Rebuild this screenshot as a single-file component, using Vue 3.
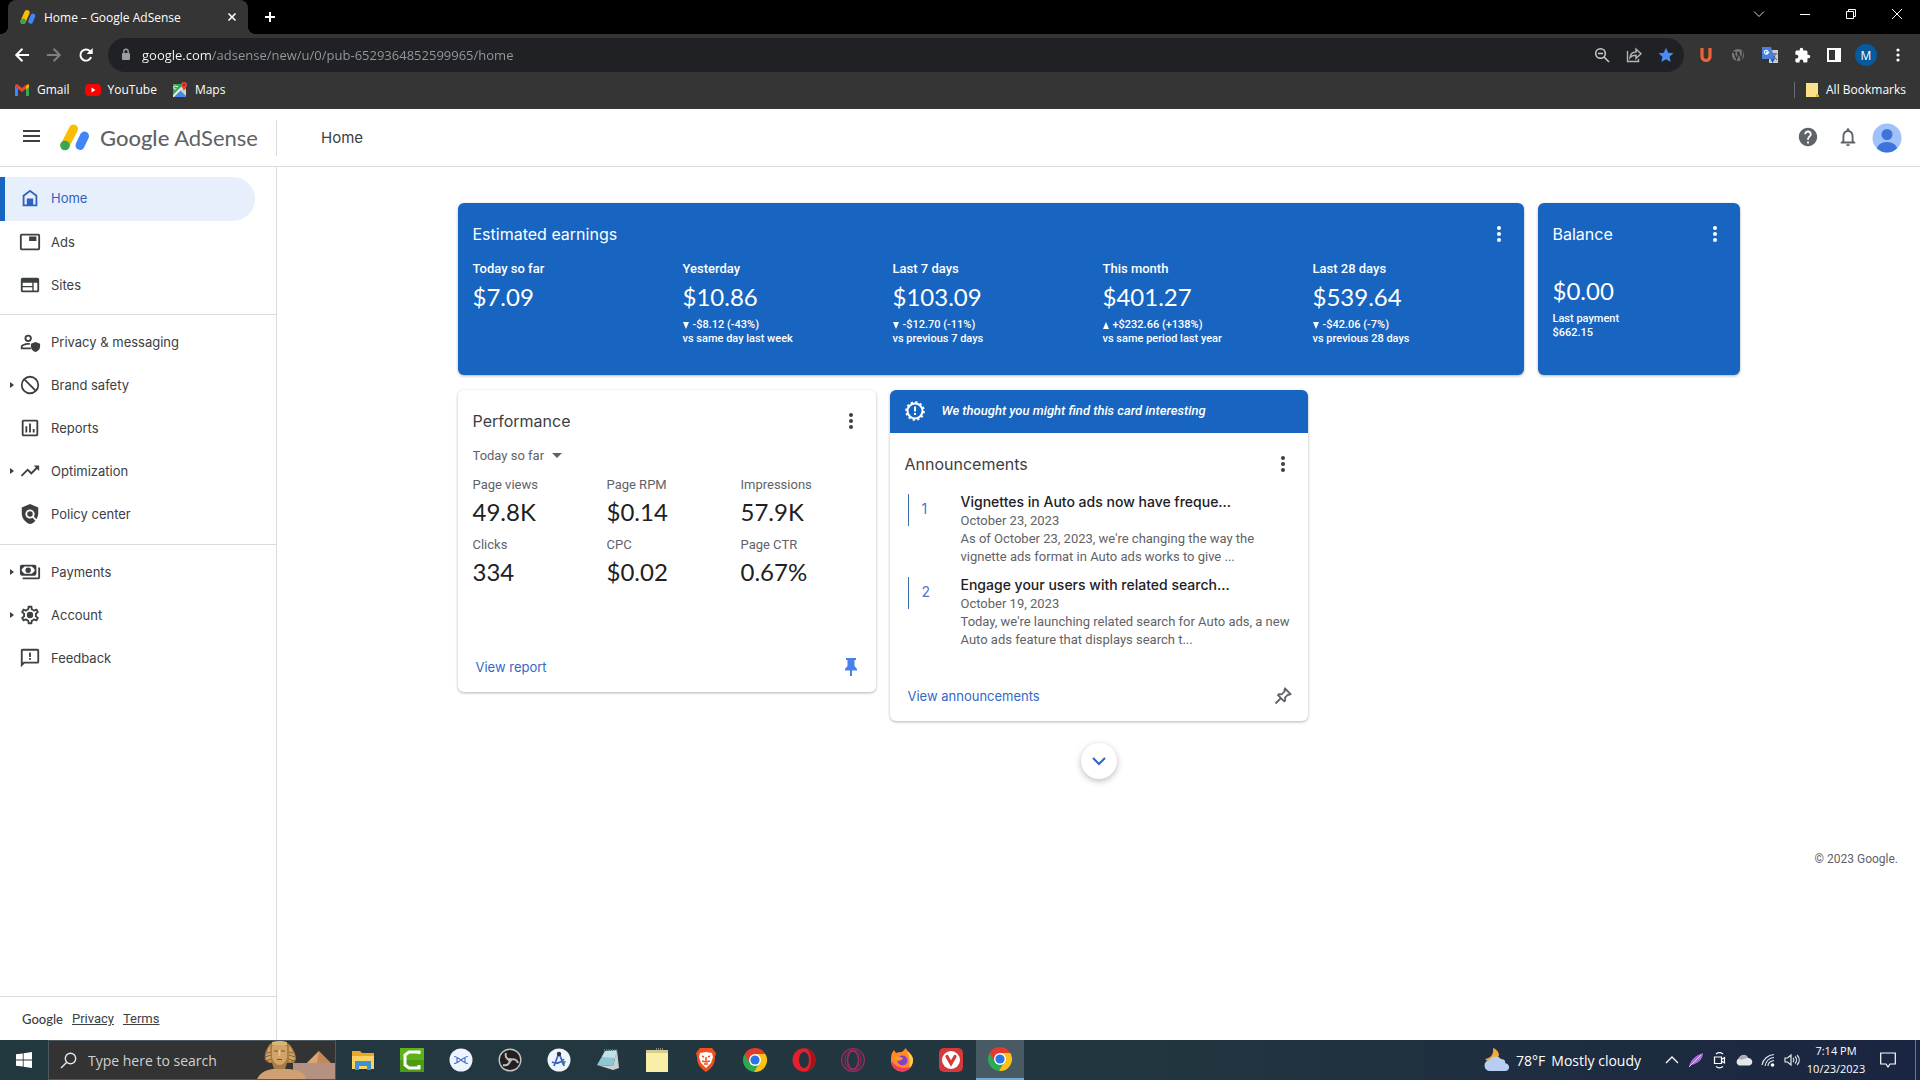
<script setup>
import { ref } from 'vue'

const url = ref('google.com/adsense/new/u/0/pub-6529364852599965/home')
const period = ref('Today so far')

const navGroups = [
  [
    { label: 'Home', icon: 'home', active: true },
    { label: 'Ads', icon: 'ads' },
    { label: 'Sites', icon: 'sites' },
  ],
  [
    { label: 'Privacy & messaging', icon: 'privacy' },
    { label: 'Brand safety', icon: 'block', expandable: true },
    { label: 'Reports', icon: 'reports' },
    { label: 'Optimization', icon: 'trend', expandable: true },
    { label: 'Policy center', icon: 'policy' },
  ],
  [
    { label: 'Payments', icon: 'payments', expandable: true },
    { label: 'Account', icon: 'gear', expandable: true },
    { label: 'Feedback', icon: 'feedback' },
  ],
]

const navPaths = {
  home: 'M12 3L4 9v12h16V9l-8-6zm6 16H6v-9l6-4.500 6 4.500v9zM8.500 12.500h7V19h-7z',
  ads: 'M19 11h-8V6h8v5zm4 8V5c0-1.100-.9-2-2-2H3c-1.100 0-2 .9-2 2v14c0 1.100.9 2 2 2h18c1.100 0 2-.9 2-2zm-2 0H3V5h18v14z',
  sites: 'M20 4H4c-1.100 0-2 .9-2 2v12c0 1.100.9 2 2 2h16c1.100 0 2-.9 2-2V6c0-1.100-.9-2-2-2zM4 9.500h10.500v3.500H4V9.500zm0 5h10.500V18H4v-3.500zM20 18h-4V9.500h4V18z',
  privacy: 'M10 4a4 4 0 1 0 0 8 4 4 0 0 0 0-8zm0 6a2 2 0 1 1 0-4 2 2 0 0 1 0 4zM10 13c-2.700 0-8 1.300-8 4v3h11v-2H4v-1c0-.6 3-2 6-2 .6 0 1.200 0 1.800.1V13.100C11.200 13 10.600 13 10 13zm8-1-5 2v3c0 2.900 2.200 5.400 5 6 2.800-.6 5-3.100 5-6v-3l-5-2z',
  block: 'M12 2a10 10 0 1 0 0 20 10 10 0 0 0 0-20zM12 4c4.420 0 8 3.580 8 8 0 1.850-.63 3.550-1.690 4.900L7.100 5.690A7.900 7.900 0 0 1 12 4zM12 20c-4.420 0-8-3.580-8-8 0-1.850.63-3.550 1.690-4.900L16.900 18.310A7.900 7.900 0 0 1 12 20z',
  reports: 'M9 17H7v-7h2v7zm4 0h-2V7h2v10zm4 0h-2v-4h2v4zm2 2H5V5h14v14zm0-16H5c-1.100 0-2 .9-2 2v14c0 1.100.9 2 2 2h14c1.100 0 2-.9 2-2V5c0-1.100-.9-2-2-2z',
  trend: 'M16 6l2.290 2.290-4.880 4.880-4-4L2 16.590 3.410 18l6-6 4 4 6.300-6.290L22 12V6z',
  policy: 'M12 1L3 5v6c0 5.550 3.840 10.740 9 12 2.300-.56 4.330-1.900 5.880-3.710l-3.120-3.120a5 5 0 1 1 1.410-1.410l2.900 2.900A12 12 0 0 0 21 11V5l-9-4zm0 8a3 3 0 1 0 0 6 3 3 0 0 0 0-6z',
  payments: 'M17 4H3a2 2 0 0 0-2 2v8a2 2 0 0 0 2 2h14a2 2 0 0 0 2-2V6a2 2 0 0 0-2-2zm0 10H3V6h14v8zm-7-7a3 3 0 1 0 0 6 3 3 0 0 0 0-6zM3 6h3L3 9zm14 0v3l-3-3zM3 14v-3l3 3zm14 0h-3l3-3zM23 7v11a2 2 0 0 1-2 2H4v-2h17V7z',
  gear: 'M19.430 12.980c.04-.32.07-.64.07-.98 0-.34-.03-.66-.07-.98l2.110-1.650c.19-.15.24-.42.12-.64l-2-3.460c-.09-.16-.26-.25-.44-.25-.06 0-.12.01-.17.03l-2.490 1c-.52-.4-1.080-.73-1.690-.98l-.38-2.650C14.460 2.180 14.250 2 14 2h-4c-.25 0-.46.18-.49.42l-.38 2.650c-.61.25-1.170.59-1.690.98l-2.490-1c-.06-.02-.12-.03-.18-.03-.17 0-.34.09-.43.25l-2 3.460c-.13.22-.07.49.12.64l2.110 1.650c-.04.32-.07.65-.07.98 0 .33.03.66.07.98l-2.110 1.650c-.19.15-.24.42-.12.64l2 3.460c.09.16.26.25.44.25.06 0 .12-.01.17-.03l2.490-1c.52.4 1.080.73 1.690.98l.38 2.650c.03.24.24.42.49.42h4c.25 0 .46-.18.49-.42l.38-2.650c.61-.25 1.170-.59 1.690-.98l2.490 1c.06.02.12.03.18.03.17 0 .34-.09.43-.25l2-3.460c.12-.22.07-.49-.12-.64l-2.110-1.650zm-1.980-1.710c.04.31.05.52.05.73 0 .21-.02.43-.05.73l-.14 1.130.89.7 1.080.84-.7 1.210-1.270-.51-1.040-.42-.9.68c-.43.32-.84.56-1.250.73l-1.060.43-.16 1.130-.2 1.350h-1.400l-.19-1.350-.16-1.130-1.060-.43c-.43-.18-.83-.41-1.230-.71l-.91-.7-1.060.43-1.270.51-.7-1.210 1.080-.84.89-.7-.14-1.130c-.03-.31-.05-.54-.05-.74s.02-.43.05-.73l.14-1.130-.89-.7-1.080-.84.7-1.210 1.270.51 1.040.42.9-.68c.43-.32.84-.56 1.250-.73l1.060-.43.16-1.130.2-1.350h1.390l.19 1.350.16 1.130 1.060.43c.43.18.83.41 1.230.71l.91.7 1.060-.43 1.270-.51.7 1.210-1.070.85-.89.7.14 1.130zM12 8.500a3.500 3.500 0 1 0 0 7 3.500 3.500 0 0 0 0-7z',
  feedback: 'M20 2H4c-1.100 0-2 .9-2 2v18l4-4h14c1.100 0 2-.9 2-2V4c0-1.100-.9-2-2-2zm0 14H5.170L4 17.170V4h16v12zM11 12h2v2h-2zm0-6h2v5h-2z',
}

const earnings = [
  { label: 'Today so far', value: '$7.09' },
  { label: 'Yesterday', value: '$10.86', up: false, delta: '-$8.12 (-43%)', versus: 'vs same day last week' },
  { label: 'Last 7 days', value: '$103.09', up: false, delta: '-$12.70 (-11%)', versus: 'vs previous 7 days' },
  { label: 'This month', value: '$401.27', up: true, delta: '+$232.66 (+138%)', versus: 'vs same period last year' },
  { label: 'Last 28 days', value: '$539.64', up: false, delta: '-$42.06 (-7%)', versus: 'vs previous 28 days' },
]

const metrics = [
  { label: 'Page views', value: '49.8K' },
  { label: 'Page RPM', value: '$0.14' },
  { label: 'Impressions', value: '57.9K' },
  { label: 'Clicks', value: '334' },
  { label: 'CPC', value: '$0.02' },
  { label: 'Page CTR', value: '0.67%' },
]

const announcements = [
  {
    title: 'Vignettes in Auto ads now have freque...',
    date: 'October 23, 2023',
    text: "As of October 23, 2023, we're changing the way the vignette ads format in Auto ads works to give ...",
  },
  {
    title: 'Engage your users with related search...',
    date: 'October 19, 2023',
    text: "Today, we're launching related search for Auto ads, a new Auto ads feature that displays search t...",
  },
]

const taskbarApps = [
  'File Explorer', 'Camtasia', 'Audio tool', 'OBS Studio', 'Android Studio', 'Notepad', 'Sticky Notes',
  'Brave', 'Chrome', 'Opera', 'Opera GX', 'Firefox', 'Vivaldi', 'Google Chrome',
]
</script>

<template>
  <div class="screen">
    <header class="browser">
      <div class="tabstrip">
        <div class="tab">
          <svg class="favicon" viewBox="0 0 30 28" aria-hidden="true">
            <path d="M6 22L13 6" stroke="#fbbc04" stroke-width="10" stroke-linecap="round" />
            <path d="M20 22L24 12" stroke="#4285f4" stroke-width="9" stroke-linecap="round" />
            <circle cx="6" cy="22" r="5" fill="#34a853" />
          </svg>
          <span class="tab-title">Home – Google AdSense</span>
          <button class="bare" aria-label="Close tab">
            <svg width="16" height="16" viewBox="0 0 16 16"><path d="M4.500 4.500l7 7M11.500 4.500l-7 7" stroke="#fff" stroke-width="1.600" /></svg>
          </button>
        </div>
        <button class="bare new-tab" aria-label="New tab">
          <svg width="16" height="16" viewBox="0 0 16 16"><path d="M8 3v10M3 8h10" stroke="#fff" stroke-width="2" /></svg>
        </button>
        <div class="window-buttons">
          <button class="bare" aria-label="Search tabs"><svg width="12" height="12" viewBox="0 0 12 12"><path d="M1 3.500l5 5 5-5" fill="none" stroke="#ddd" /></svg></button>
          <button class="bare" aria-label="Minimize"><svg width="12" height="12" viewBox="0 0 12 12"><path d="M1 6.500h10" stroke="#fff" /></svg></button>
          <button class="bare" aria-label="Restore"><svg width="12" height="12" viewBox="0 0 12 12"><path d="M1.500 3.500h7v7h-7zM3.500 3.500v-2h7v7h-2" fill="none" stroke="#fff" /></svg></button>
          <button class="bare" aria-label="Close"><svg width="12" height="12" viewBox="0 0 12 12"><path d="M1 1l10 10M11 1L1 11" stroke="#fff" /></svg></button>
        </div>
      </div>

      <div class="toolbar">
        <div class="nav-buttons">
          <button class="bare" aria-label="Back"><svg width="16" height="16" viewBox="0 0 18 18"><path d="M17 9H3M9.500 2L2.500 9l7 7" fill="none" stroke="#fff" stroke-width="2.200" /></svg></button>
          <button class="bare" aria-label="Forward"><svg width="16" height="16" viewBox="0 0 18 18"><path d="M1 9h14M8.500 2l7 7-7 7" fill="none" stroke="#7f8081" stroke-width="2.200" /></svg></button>
          <button class="bare" aria-label="Reload"><svg width="16" height="16" viewBox="0 0 18 18"><path d="M14.800 11.500A6.300 6.300 0 1 1 13.500 4.600L15 6" fill="none" stroke="#fff" stroke-width="2.200" /><path d="M16.500 1v7H9.700z" fill="#fff" /></svg></button>
        </div>
        <div class="omnibox">
          <svg class="lock" width="12" height="14" viewBox="0 0 12 14" aria-hidden="true"><rect x="2" y="5" width="8" height="7" rx="1" fill="#9a9da1" /><path d="M3.800 6V3.500a2.200 2.200 0 0 1 4.400 0V6" fill="none" stroke="#9a9da1" stroke-width="1.400" /></svg>
          <input v-model="url" class="url" type="text" aria-label="Address" spellcheck="false" />
          <button class="bare slot" aria-label="Zoom"><svg width="16" height="16" viewBox="0 0 16 16"><g fill="none" stroke="#c8cacd" stroke-width="1.500"><circle cx="6.500" cy="6.500" r="4.800" /><path d="M10 10l5 5M4 6.500h5" /></g></svg></button>
          <button class="bare slot" aria-label="Share"><svg width="16" height="16" viewBox="0 0 16 16"><g fill="none" stroke="#b4b7ba" stroke-width="1.400"><path d="M1.500 4v10.500h11V12M4 10.500c.5-4 2.500-5.500 6-5.500V2l5 4.700-5 4.600V8.200c-3 0-4.700.6-6 2.300z" /></g></svg></button>
          <button class="bare slot" aria-label="Bookmark this tab"><svg width="16" height="16" viewBox="0 0 16 16"><path d="M8 .8l2.200 4.900 5.300.5-4 3.600 1.200 5.200L8 12.300 3.300 15l1.200-5.200-4-3.600 5.300-.5z" fill="#4a8cf7" /></svg></button>
        </div>
        <div class="extensions">
          <button class="bare slot" aria-label="Ubersuggest"><svg width="16" height="16" viewBox="0 0 16 16"><path d="M4 1v8.500a4 4 0 0 0 8 0V1" fill="none" stroke="#ee6236" stroke-width="3.200" /></svg></button>
          <button class="bare slot" aria-label="WordPress"><svg width="14" height="14" viewBox="0 0 16 16"><circle cx="8" cy="8" r="7" fill="#777" /><path d="M2 5h3.500M3.500 5l3 8 1.800-6L7.500 5M6.800 5h3M8.800 5l2.700 8 2-6.500-1.200-2.500" fill="none" stroke="#2e2e2e" stroke-width="1.400" /></svg></button>
          <button class="bare slot" aria-label="Translate"><svg width="18" height="18" viewBox="0 0 18 18"><path d="M8 4h9v13H8z" fill="#c9cdd3" /><path d="M1 1h9l4 12H1z" fill="#4a7fe0" /><path d="M9.500 13H14l-2.500 4z" fill="#2857b5" /><path d="M8.200 6H5.800v1.200h1.100A1.900 1.900 0 1 1 6.800 5" fill="none" stroke="#fff" stroke-width="1.200" /><path d="M11.500 8h5M14 7v1c0 3-1 4-2 5M12.500 10l3.500 4" fill="none" stroke="#55606e" /></svg></button>
          <button class="bare slot" aria-label="Extensions"><svg width="17" height="17" viewBox="0 0 24 24"><path d="M20.500 11H19V7c0-1.100-.9-2-2-2h-4V3.500a2.500 2.500 0 0 0-5 0V5H4c-1.100 0-2 .9-2 2v3.800h1.500a2.700 2.700 0 0 1 0 5.400H2V20c0 1.100.9 2 2 2h3.800v-1.500a2.700 2.700 0 0 1 5.400 0V22H17c1.100 0 2-.9 2-2v-4h1.500a2.500 2.500 0 0 0 0-5z" fill="#fff" /></svg></button>
          <button class="bare slot" aria-label="Side panel"><svg width="14" height="14" viewBox="0 0 14 14"><path d="M0 0h14v14H0zM2 2v10h6V2z" fill="#fff" fill-rule="evenodd" /></svg></button>
          <button class="bare slot" aria-label="Profile"><span class="profile">M</span></button>
          <button class="bare slot" aria-label="Chrome menu"><svg width="4" height="14" viewBox="0 0 4 14" fill="#fff"><circle cx="2" cy="2" r="1.600" /><circle cx="2" cy="7" r="1.600" /><circle cx="2" cy="12" r="1.600" /></svg></button>
        </div>
      </div>

      <nav class="bookmarks" aria-label="Bookmarks">
        <a href="#"><svg width="16" height="14" viewBox="0 0 16 14"><path d="M1 3v10h3V6z" fill="#4285f4" /><path d="M15 3v10h-3V6z" fill="#34a853" /><path d="M1 3.500L8 9l7-5.500V2l-2-1-5 4-5-4-2 1z" fill="#ea4335" /><path d="M12 3.500L15 1v3l-3 2.500z" fill="#fbbc04" /></svg>Gmail</a>
        <a href="#"><svg width="16" height="16" viewBox="0 0 16 16"><rect y="2" width="16" height="12" rx="4" fill="#f00" /><path d="M6.500 5.500v5l4-2.500z" fill="#fff" /></svg>YouTube</a>
        <a href="#"><svg width="16" height="16" viewBox="0 0 16 16"><rect x="1" y="2" width="13" height="13" fill="#34a853" /><path d="M3 15l5-6 6 6z" fill="#4285f4" /><path d="M1 13L11 3l2 1-11 11H1z" fill="#e8eaed" /><path d="M8 8l6 6V8l-2-3z" fill="#cfd4da" /><path d="M6 4.500H4.200a1.500 1.500 0 1 0 .1 2" fill="none" stroke="#fff" /><path d="M12 0a3 3 0 0 0-3 3c0 2 2 3 3 6 1-3 3-4 3-6a3 3 0 0 0-3-3z" fill="#ea4335" /><circle cx="12" cy="3" r="1" fill="#8c1a11" /></svg>Maps</a>
        <a class="all-bookmarks" href="#"><svg width="13" height="14" viewBox="0 0 13 14"><path d="M0 0h12v14H0z" fill="#fbe08a" /><path d="M10 11l3 1v2h-3z" fill="#d9bb3c" /></svg>All Bookmarks</a>
      </nav>
    </header>

    <header class="app-bar">
      <div class="brand">
        <button class="bare menu" aria-label="Main menu"><svg width="18" height="12" viewBox="0 0 18 12"><path d="M0 1h17M0 6h17M0 11h17" stroke="#3c4043" stroke-width="2" /></svg></button>
        <svg class="logo" width="30" height="27" viewBox="0 0 30 27" aria-hidden="true">
          <path d="M5 21.500L13.500 5" stroke="#fbbc04" stroke-width="9" stroke-linecap="round" />
          <path d="M20 21.500L24.500 12" stroke="#4285f4" stroke-width="9" stroke-linecap="round" />
          <circle cx="5" cy="21.500" r="4.800" fill="#34a853" />
        </svg>
        <span class="wordmark"><b>Google</b> AdSense</span>
      </div>
      <h1 class="page-title">Home</h1>
      <div class="account-tools">
        <button class="bare" aria-label="Help"><svg width="22" height="22" viewBox="0 0 24 24"><path fill="#5f6368" d="M12 2C6.480 2 2 6.480 2 12s4.480 10 10 10 10-4.480 10-10S17.520 2 12 2zm1 17h-2v-2h2v2zm2.070-7.750l-.9.92C13.450 12.900 13 13.500 13 15h-2v-.5c0-1.100.45-2.100 1.170-2.830l1.240-1.260c.37-.36.59-.86.59-1.410 0-1.100-.9-2-2-2s-2 .9-2 2H8c0-2.210 1.790-4 4-4s4 1.790 4 4c0 .88-.36 1.680-.93 2.250z" /></svg></button>
        <button class="bare" aria-label="Notifications"><svg width="22" height="22" viewBox="0 0 24 24"><path fill="#5f6368" d="M12 22c1.100 0 2-.9 2-2h-4c0 1.100.9 2 2 2zm6-6v-5c0-3.070-1.630-5.640-4.500-6.320V4c0-.83-.67-1.500-1.500-1.500s-1.500.67-1.500 1.500v.68C7.640 5.360 6 7.920 6 11v5l-2 2v1h16v-1l-2-2zm-2 1H8v-6c0-2.480 1.510-4.500 4-4.500s4 2.020 4 4.500v6z" /></svg></button>
        <button class="bare avatar" aria-label="Google account"><svg width="30" height="30" viewBox="0 0 30 30"><clipPath id="face"><circle cx="15" cy="15" r="14.500" /></clipPath><g clip-path="url(#face)"><path d="M0 0h30v30H0z" fill="#a0c2f9" /><circle cx="15" cy="11.500" r="5.500" fill="#3f73dc" /><ellipse cx="15" cy="25.500" rx="10" ry="6.500" fill="#3f73dc" /></g></svg></button>
      </div>
    </header>

    <div class="body">
      <aside class="sidebar">
        <nav aria-label="Main">
          <ul v-for="(group, g) in navGroups" :key="g" class="nav-group">
            <li v-for="item in group" :key="item.label">
              <a href="#" class="nav-item" :class="{ active: item.active }">
                <svg v-if="item.expandable" class="arrow" width="4" height="6" viewBox="0 0 4 6"><path d="M0 0l4 3-4 3z" fill="#3c4043" /></svg>
                <svg class="nav-icon" width="22" height="22" viewBox="0 0 24 24"><path :d="navPaths[item.icon]" fill="currentColor" fill-rule="evenodd" /></svg>
                {{ item.label }}
              </a>
            </li>
          </ul>
        </nav>
        <footer class="legal">
          <span class="legal-brand">Google</span>
          <a href="#">Privacy</a>
          <a href="#">Terms</a>
        </footer>
      </aside>

      <main class="content">
        <div class="cards">
          <section class="card blue earnings">
            <div class="card-head">
              <h2>Estimated earnings</h2>
              <button class="bare kebab" aria-label="Earnings options"><svg width="4" height="16" viewBox="0 0 4 16" fill="currentColor"><circle cx="2" cy="2" r="2" /><circle cx="2" cy="8" r="2" /><circle cx="2" cy="14" r="2" /></svg></button>
            </div>
            <div class="earning-row">
              <div v-for="e in earnings" :key="e.label">
                <div class="earning-label">{{ e.label }}</div>
                <div class="figure">{{ e.value }}</div>
                <template v-if="e.delta">
                  <div class="small delta">
                    <svg width="6" height="7" viewBox="0 0 6 7"><path :d="e.up ? 'M0 7h6L3 0z' : 'M0 0h6L3 7z'" fill="#fff" /></svg>{{ e.delta }}
                  </div>
                  <div class="small">{{ e.versus }}</div>
                </template>
              </div>
            </div>
          </section>

          <section class="card blue balance">
            <div class="card-head">
              <h2>Balance</h2>
              <button class="bare kebab" aria-label="Balance options"><svg width="4" height="16" viewBox="0 0 4 16" fill="currentColor"><circle cx="2" cy="2" r="2" /><circle cx="2" cy="8" r="2" /><circle cx="2" cy="14" r="2" /></svg></button>
            </div>
            <div class="figure">$0.00</div>
            <div class="small">Last payment</div>
            <div class="small">$662.15</div>
          </section>

          <section class="card performance">
            <div class="card-head">
              <h2>Performance</h2>
              <button class="bare kebab" aria-label="Performance options"><svg width="4" height="16" viewBox="0 0 4 16" fill="currentColor"><circle cx="2" cy="2" r="2" /><circle cx="2" cy="8" r="2" /><circle cx="2" cy="14" r="2" /></svg></button>
            </div>
            <div class="period">
              <select v-model="period" aria-label="Date range"><option>Today so far</option><option>Yesterday</option></select>
              <svg width="10" height="5" viewBox="0 0 10 5" aria-hidden="true"><path d="M0 0h10L5 5z" fill="#5f6368" /></svg>
            </div>
            <div class="metrics">
              <div v-for="m in metrics" :key="m.label">
                <div class="metric-label">{{ m.label }}</div>
                <div class="figure">{{ m.value }}</div>
              </div>
            </div>
            <div class="card-foot">
              <a href="#">View report</a>
              <button class="bare pin" aria-label="Unpin card"><svg width="12" height="18" viewBox="0 0 12 18"><path d="M1 0h10v2H9.500v6l2.500 3v1.500H7V18H5v-5.500H0V11l2.500-3V2H1z" fill="#4a80ea" /></svg></button>
            </div>
          </section>

          <section class="card announcements">
            <div class="banner">
              <svg width="20" height="20" viewBox="0 0 20 20" aria-hidden="true"><circle cx="10" cy="10" r="8.800" fill="none" stroke="#fff" stroke-width="2" stroke-dasharray="2.300 2.300" /><circle cx="10" cy="10" r="7.500" fill="none" stroke="#fff" stroke-width="2" /><path d="M9 5.500h2v5H9zM9 12h2v2H9z" fill="#fff" /></svg>
              <em>We thought you might find this card interesting</em>
            </div>
            <div class="card-head">
              <h2>Announcements</h2>
              <button class="bare kebab" aria-label="Announcement options"><svg width="4" height="16" viewBox="0 0 4 16" fill="currentColor"><circle cx="2" cy="2" r="2" /><circle cx="2" cy="8" r="2" /><circle cx="2" cy="14" r="2" /></svg></button>
            </div>
            <ol class="news">
              <li v-for="(a, i) in announcements" :key="a.title">
                <span class="ordinal">{{ i + 1 }}</span>
                <div>
                  <h3>{{ a.title }}</h3>
                  <time>{{ a.date }}</time>
                  <p>{{ a.text }}</p>
                </div>
              </li>
            </ol>
            <div class="card-foot">
              <a href="#">View announcements</a>
              <button class="bare pin" aria-label="Pin card"><svg width="18" height="18" viewBox="0 0 18 18"><path d="M11 1.500l5.500 5.500-1.300.8-1.200-.2-3 3 .2 2.900-1 .8L4 8.100l.8-1 2.900.2 3-3-.3-1.500zM7 11l-5.500 5.500" fill="none" stroke="#5f6368" stroke-width="1.800" /></svg></button>
            </div>
          </section>
        </div>
        <button class="more" aria-label="Show more cards"><svg width="14" height="9" viewBox="0 0 14 9"><path d="M1 1l6 6 6-6" fill="none" stroke="#2f62c9" stroke-width="2" /></svg></button>
        <p class="copyright">© 2023 Google.</p>
      </main>
    </div>

    <footer class="taskbar">
      <button class="bare start" aria-label="Start"><svg width="16" height="16" viewBox="0 0 16 16"><path d="M0 2.300l6.800-.9v6.200H0zM7.600 1.300L16 0v7.600H7.600zM0 8.400h6.800v6.200L0 13.700zM7.600 8.400H16V16l-8.400-1.200z" fill="#fff" /></svg></button>
      <label class="search">
        <svg width="17" height="17" viewBox="0 0 17 17" aria-hidden="true"><circle cx="10.500" cy="6.500" r="5.200" fill="none" stroke="#e8e8e8" stroke-width="1.400" /><path d="M6.800 10.200L1 16" stroke="#e8e8e8" stroke-width="1.400" /></svg>
        <input type="text" placeholder="Type here to search" aria-label="Type here to search" />
        <svg class="sphinx" width="80" height="38" viewBox="0 0 80 38" aria-hidden="true">
          <path d="M38 22h42v16H38z" fill="#b49180" />
          <path d="M52 22L64 10l12 12z" fill="#c08a5c" /><path d="M52 22L64 10l-2 12z" fill="#dba574" />
          <path d="M2 38c3-6 8-9 16-10h16c10 1 16 4 17 10z" fill="#cfa071" />
          <path d="M15 3c-4 5-6 11-5 16l4 3h3l2 6h11l2-6h7l2-4C41 12 37 6 34 3c-5-3-14-3-19 0z" fill="#a87b48" />
          <path d="M15 4c-3 5-4 10-4 14l5 3zM34 4c3 5 6 10 6 14l-6 3z" fill="#cfa568" />
          <path d="M17 5c4-2 11-2 15 0v11c-1 5-4 8-7.500 8S18 21 17 16z" fill="#d3a468" />
          <path d="M19 10h4M26 10h4M22 18.500h5" stroke="#7a532c" stroke-width="1.200" />
          <path d="M24.500 9v6" stroke="#e9c78f" stroke-width="1.500" />
          <path d="M11 20l5-2M10 16l6-2M12 12l4-1M39 20l-5-2M40 16l-6-2M38 12l-4-1" stroke="#8a602f" />
          <path d="M17 1c5-1.500 11-1.500 15 0v3H17z" fill="#d9b674" />
        </svg>
      </label>
      <ul class="apps">
        <li v-for="(app, i) in taskbarApps" :key="app">
          <button class="bare app" :class="{ running: i === 13 }" :aria-label="app">
            <svg width="24" height="24" viewBox="0 0 24 24">
              <g v-if="i === 0"><path d="M1 3h8l2 2h12v16H1z" fill="#e8a925" /><path d="M1 8h22v13H1z" fill="#fbd163" /><path d="M4 22v-9h16v9h-4v-4H8v4z" fill="#3d93cf" /></g>
              <g v-else-if="i === 1"><path d="M0 0h24v24H0z" fill="#4c9b12" /><path d="M0 0h24v12H0z" fill="#5eb31a" /><path d="M19 6V4H9L5 7v10l4 3h10v-3" fill="none" stroke="#fff" stroke-width="3" /></g>
              <g v-else-if="i === 2"><circle cx="12" cy="12" r="11.500" fill="#eef4ff" /><path d="M5 8.500c5 0 9 7 14 7M5 15.500c5 0 9-7 14-7M8 9.500v5M16 9.500v5" fill="none" stroke="#5077c8" stroke-width="1.200" /></g>
              <g v-else-if="i === 3"><circle cx="12" cy="12" r="10.800" fill="#231f20" stroke="#c3c3c3" stroke-width="1.400" /><path d="M12 12c-4-1-5-4-4-7M12 12c4-2 7 0 8 3M12 12c0 4-3 6-7 5" fill="none" stroke="#bdbdbd" stroke-width="2" /><circle cx="12" cy="12" r="2" fill="#bdbdbd" /></g>
              <g v-else-if="i === 4"><circle cx="12" cy="12" r="11.500" fill="#eff5fb" /><path d="M13 13h6l-2 5z" fill="#38a86b" /><path d="M12 5L7 18M12 5l5 13M5 14c4 2 9 1 12-3" fill="none" stroke="#3c66c8" stroke-width="1.800" /><circle cx="12" cy="6" r="2.200" fill="#26374d" /></g>
              <g v-else-if="i === 5"><path d="M9 3l12-1-4 16-16-1z" fill="#8ec6d2" /><path d="M9 3l12-1-2 8-13-1z" fill="#c3e0e6" /><path d="M21 2l2 18-6 2-16-5 16 1z" fill="#c9d0d2" /><path d="M8 2h13" stroke="#537780" stroke-dasharray="1 1" stroke-width="2" /></g>
              <g v-else-if="i === 6"><path d="M1 2h22v22H1z" fill="#f9efa8" /><path d="M1 2h22v3H1z" fill="#d6cb8e" /><path d="M11 1h8" stroke="#888" stroke-dasharray="1 1" stroke-width="2" /></g>
              <g v-else-if="i === 7"><path d="M6 0h12l4 5-1 4c0 7-3 11-9 15-6-4-9-8-9-15L2 5z" fill="#f0501f" /><path d="M6 5l6-1 6 1 1 4-2 6-5 5-5-5-2-6z" fill="#fff" /><path d="M8 8l2 1M16 8l-2 1M12 9v4M8 13l4 1 4-1M10 16h4" stroke="#f0501f" stroke-width="1.600" fill="none" /></g>
              <g v-else-if="i === 9"><ellipse cx="12" cy="12" rx="11.500" ry="11.800" fill="#e3202c" /><path d="M15 1c11 3 11 19 0 22 3-3 4-7 4-11s-1-8-4-11z" fill="#a3141c" /><ellipse cx="12" cy="12" rx="5" ry="8" fill="#22353e" /></g>
              <g v-else-if="i === 10" fill="none" stroke="#a02a61"><circle cx="12" cy="12" r="11.300" stroke-width="1.300" /><ellipse cx="12" cy="12" rx="5.500" ry="9" stroke-width="1.600" /><ellipse cx="12" cy="12" rx="8" ry="10" /></g>
              <g v-else-if="i === 11"><path d="M2 5l2-3 2 3c2-1 4-1 6-1l4-4c0 3 7 5 7 12a11 11 0 0 1-22 1c0-3 0-6 1-8z" fill="#ff8a27" /><path d="M15 1c1 3 8 5 8 11a10 10 0 0 1-4 8c2-7 0-14-4-19z" fill="#ffd44a" /><path d="M1.500 13a10.500 10.500 0 0 0 19 6c-7 2-14 1-19-6z" fill="#f03a62" /><circle cx="12.500" cy="12.500" r="5" fill="#8541c4" /><path d="M5 9c3-2 6 1 8 1-1 3-4 2-5 3z" fill="#ff9a31" /></g>
              <g v-else-if="i === 12"><rect width="24" height="24" rx="5" fill="#d5393c" /><circle cx="12" cy="12" r="9" fill="#fff" /><path d="M8 8.500l4 7 4-7" fill="none" stroke="#d5393c" stroke-width="3.200" stroke-linecap="round" /></g>
              <g v-else><path d="M1.600 6A12 12 0 0 0 11 24l5-9z" fill="#2da94f" /><path d="M12 6h10.400A12 12 0 0 1 11 24l5-9z" fill="#fbc116" /><path d="M1.600 6l5.200 9L12 6h10.400A12 12 0 0 0 1.600 6z" fill="#e33b2e" /><circle cx="12" cy="12" r="6" fill="#fff" /><circle cx="12" cy="12" r="4.600" fill="#2a75e6" /></g>
            </svg>
          </button>
        </li>
      </ul>
      <div class="tray">
        <button class="bare weather">
          <svg width="26" height="24" viewBox="0 0 26 24" aria-hidden="true"><path d="M9 0c1 6-2 10-8 11 3 4 12 3 14-4C15 4 12 1 9 0z" fill="#f2a93c" /><path d="M6 23a5.500 5.500 0 0 1 0-11c1-4 8-5 11-1 4 0 5 3 4 4 6 1 5 8 0 8z" fill="#b9cdf3" /></svg>
          <span>78°F</span><span>Mostly cloudy</span>
        </button>
        <button class="bare tray-slot" aria-label="Show hidden icons"><svg width="14" height="8" viewBox="0 0 14 8"><path d="M1 7l6-6 6 6" fill="none" stroke="#fff" stroke-width="1.300" /></svg></button>
        <button class="bare tray-slot" aria-label="Feather"><svg width="16" height="16" viewBox="0 0 16 16"><path d="M1 15C2 8 8 3 15 1c0 6-5 11-12 12z" fill="#a86fd0" /><path d="M1 15L13 3" stroke="#e3c8f3" /></svg></button>
        <button class="bare tray-slot" aria-label="Meet now"><svg width="14" height="16" viewBox="0 0 14 16"><path d="M1.500 5h7v6.500h-7zM8.500 7.500l3-2v5.500l-3-2M3 2c2-1.500 5-1.500 7 0M3 14.500c2 1.500 5 1.500 7 0" fill="none" stroke="#fff" stroke-width="1.200" /></svg></button>
        <button class="bare tray-slot" aria-label="OneDrive"><svg width="18" height="12" viewBox="0 0 18 12"><path d="M4 11.500a3.700 3.700 0 0 1 0-7C6 0 12 0 13 4c5 0 6 7 1 7.500z" fill="#e4e6ea" /><path d="M3 5c3-6 9-5 10-1-3 0-5 1-6 2-1-1-2-1-4-1z" fill="#a9adb5" /></svg></button>
        <button class="bare tray-slot" aria-label="Network"><svg width="14" height="14" viewBox="0 0 14 14"><g fill="none" stroke="#dfe3ea" stroke-width="1.200"><path d="M1 12C2 6 7 2 13 1.500M4 13c1-5 4-8 9-8.500M7 13c0-3 3-5 6-5.500" /></g><circle cx="11.500" cy="12" r="1.800" fill="#fff" /></svg></button>
        <button class="bare tray-slot" aria-label="Volume"><svg width="16" height="14" viewBox="0 0 16 14"><path d="M1 5h2.500L7 2v10L3.500 9H1zM9 5c1 1 1 3 0 4M11 3.500c2 2 2 5 0 7M13 2c3 3 3 7 0 10" fill="none" stroke="#e3e7ee" stroke-width="1.200" /></svg></button>
        <button class="bare clock"><span>7:14 PM</span><span>10/23/2023</span></button>
        <button class="bare action" aria-label="Notifications"><svg width="16" height="16" viewBox="0 0 16 16"><path d="M.7 1h14.600v11H10l-2 3-2-3H.7z" fill="none" stroke="#fff" stroke-width="1.200" /></svg></button>
      </div>
    </footer>
  </div>
</template>

<style>
body {
  margin: 0;
}
</style>

<style scoped>
.screen {
  --google: Inter, sans-serif;
  --figure: Lato, sans-serif;
  --segoe: "Open Sans", sans-serif;
  display: flex;
  flex-direction: column;
  min-height: 100vh;
  background: #fff;
  color: #3c4043;
  font-family: Roboto, sans-serif;
  font-size: 13px;
}
.screen * {
  box-sizing: border-box;
}
svg {
  display: block;
  flex: none;
  overflow: visible;
}
.bare {
  display: flex;
  align-items: center;
  justify-content: center;
  padding: 0;
  border: 0;
  background: none;
  color: inherit;
  font: inherit;
}
a {
  color: inherit;
  text-decoration: none;
}
h1, h2, h3, p, ul, ol {
  margin: 0;
  padding: 0;
  font-weight: 400;
  list-style: none;
}

/* Browser chrome */
.browser {
  background: #353535;
  color: #fff;
  font-family: var(--segoe);
  font-size: 12px;
}
.tabstrip {
  display: flex;
  height: 34px;
  background: #000;
}
.tab {
  position: relative;
  display: flex;
  align-items: center;
  width: 240px;
  margin-left: 8px;
  padding: 0 8px 0 12px;
  border-radius: 8px 8px 0 0;
  background: #353535;
}
.tab::before,
.tab::after {
  content: "";
  position: absolute;
  bottom: 0;
  width: 8px;
  height: 8px;
}
.tab::before {
  right: 100%;
  background: radial-gradient(circle at 0 0, #000 8px, #353535 8px);
}
.tab::after {
  left: 100%;
  background: radial-gradient(circle at 100% 0, #000 8px, #353535 8px);
}
.favicon {
  width: 16px;
  height: 16px;
}
.tab-title {
  flex: 1;
  margin-left: 8px;
}
.new-tab {
  margin-left: 14px;
}
.window-buttons {
  display: flex;
  height: 28px;
  margin-left: auto;
}
.window-buttons button {
  width: 46px;
}
.toolbar {
  display: flex;
  align-items: center;
  height: 42px;
  padding: 0 6px;
}
.nav-buttons {
  display: flex;
  width: 102px;
}
.nav-buttons button {
  width: 32px;
}
.omnibox {
  display: flex;
  flex: 1;
  align-items: center;
  height: 34px;
  padding: 0 2px 0 12px;
  border-radius: 17px;
  background: #202124;
}
.url {
  flex: 1;
  min-width: 0;
  margin-left: 10px;
  padding: 0;
  border: 0;
  outline: 0;
  background: linear-gradient(90deg, #fff 70px, #969a9e 70px);
  background-clip: text;
  -webkit-background-clip: text;
  color: transparent;
  font: 13px var(--segoe);
}
.slot {
  width: 32px;
  height: 32px;
}
.extensions {
  display: flex;
  margin-left: 6px;
}
.profile {
  display: flex;
  align-items: center;
  justify-content: center;
  width: 22px;
  height: 22px;
  border-radius: 50%;
  background: #065a9e;
}
.bookmarks {
  display: flex;
  align-items: center;
  gap: 15px;
  height: 33px;
  padding: 0 14px 6px;
}
.bookmarks a {
  display: flex;
  align-items: center;
  gap: 7px;
}
.all-bookmarks {
  height: 16px;
  margin-left: auto;
  padding-left: 11px;
  border-left: 1px solid #6b6b6b;
}

/* Product bar */
.app-bar {
  display: flex;
  align-items: center;
  height: 58px;
  border-bottom: 1px solid #dadce0;
}
.brand {
  display: flex;
  align-items: center;
  width: 277px;
  height: 36px;
  padding-left: 23px;
  border-right: 1px solid #dadce0;
}
.menu {
  padding-bottom: 3px;
}
.logo {
  margin-left: 19px;
}
.wordmark {
  margin-left: 10px;
  color: #5f6368;
  font: 22px var(--figure);
}
.wordmark b {
  font-weight: 500;
}
.page-title {
  margin-left: 44px;
  font: 15px var(--google);
}
.account-tools {
  display: flex;
  margin-left: auto;
  padding-right: 14px;
}
.account-tools button {
  width: 40px;
  padding-bottom: 2px;
}
.account-tools .avatar {
  width: 38px;
  padding-bottom: 0;
}

/* Sidebar */
.body {
  display: flex;
  flex: 1;
}
.sidebar {
  display: flex;
  flex: none;
  flex-direction: column;
  justify-content: space-between;
  width: 277px;
  border-right: 1px solid #dadce0;
}
.nav-group {
  padding: 6px 0 8px;
}
.nav-group:first-child {
  padding: 10px 0 7px;
}
.nav-group + .nav-group {
  border-top: 1px solid #dadce0;
}
.nav-item {
  position: relative;
  display: flex;
  align-items: center;
  height: 43px;
  margin-right: 21px;
  padding: 0 0 2px 19px;
  font-family: var(--google);
  font-size: 13px;
}
.nav-item.active {
  height: 44px;
  padding-left: 14px;
  border-left: 5px solid #1765c0;
  border-radius: 0 22px 22px 0;
  background: #e8effc;
  color: #2f62c0;
}
.nav-icon {
  margin-right: 10px;
}
.arrow {
  position: absolute;
  left: 10px;
}
.legal {
  display: flex;
  align-items: center;
  gap: 9px;
  height: 44px;
  padding: 0 22px;
  border-top: 1px solid #dadce0;
}
.legal a {
  text-decoration: underline;
}
.legal-brand {
  font: 500 13px var(--figure);
}

/* Cards */
.content {
  flex: 1;
  padding: 36px 22px 0;
}
.cards {
  display: grid;
  grid-template-columns: repeat(12, 1fr);
  gap: 15px 14px;
  align-items: start;
  max-width: 1282px;
  margin: 0 auto;
}
.card {
  border-radius: 6px;
  background: #fff;
  box-shadow: 0 1px 3px rgba(60, 64, 67, 0.4);
}
.blue {
  height: 172px;
  background: #1765c0;
  color: #fff;
}
.earnings {
  grid-column: span 10;
}
.balance {
  grid-column: span 2;
}
.performance,
.announcements {
  grid-column: span 4;
}
.card-head {
  display: flex;
  align-items: center;
  justify-content: space-between;
  height: 56px;
  padding: 6px 15px 0;
}
.card-head h2 {
  font: 16px var(--google);
}
.kebab {
  width: 20px;
  height: 24px;
}
.figure {
  font: 24px/30px var(--figure);
}
.earning-row {
  display: grid;
  grid-template-columns: repeat(5, 210px);
  padding: 1px 0 0 15px;
}
.earning-label {
  margin-bottom: 4px;
  font-weight: 500;
  line-height: 18px;
}
.small {
  font-size: 11px;
  font-weight: 500;
  line-height: 14px;
}
.delta {
  display: flex;
  align-items: center;
  gap: 4px;
  margin-top: 6px;
}
.balance .figure {
  margin: 17px 0 6px;
}
.balance .figure,
.balance .small {
  padding-left: 15px;
}
.period {
  display: flex;
  align-items: center;
  height: 18px;
  padding-left: 15px;
  color: #5f6368;
}
.period select {
  appearance: none;
  width: 79px;
  padding: 0;
  border: 0;
  background: none;
  color: inherit;
  font: inherit;
}
.metrics {
  display: grid;
  grid-template-columns: repeat(3, 134px);
  row-gap: 9px;
  padding: 12px 0 0 15px;
}
.metric-label {
  color: #5f6368;
  line-height: 18px;
}
.metrics .figure {
  padding-top: 3px;
  color: #202124;
}
.card-foot {
  display: flex;
  align-items: center;
  justify-content: space-between;
  height: 50px;
  padding: 0 15px 0 18px;
  color: #3367c9;
  font: 13px var(--google);
}
.pin {
  width: 20px;
}
.performance .card-foot {
  margin-top: 55px;
}
.banner {
  display: flex;
  align-items: center;
  gap: 17px;
  height: 43px;
  padding: 0 0 2px 15px;
  border-radius: 6px 6px 0 0;
  background: #1765c0;
  color: #fff;
  font-weight: 500;
}
.news {
  padding: 5px 0 11px;
}
.news li {
  display: flex;
  height: 83px;
  padding-right: 16px;
}
.ordinal {
  width: 53px;
  height: 32px;
  margin-left: 18px;
  padding-left: 13px;
  border-left: 1px solid #3a6ea8;
  color: #4a76c9;
  font: 14px/30px var(--google);
}
.news div {
  flex: 1;
  margin-top: -3px;
}
.news h3 {
  color: #202124;
  font: 500 14px/21px var(--google);
}
.news time,
.news p {
  display: block;
  color: #5f6368;
  line-height: 18px;
}
.more {
  display: flex;
  align-items: center;
  justify-content: center;
  width: 36px;
  height: 36px;
  margin: 22px auto 0;
  padding: 0;
  border: 0;
  border-radius: 50%;
  background: #fff;
  box-shadow: 0 2px 6px rgba(60, 64, 67, 0.35);
}
.copyright {
  margin-top: 71px;
  color: #5f6368;
  font-size: 12px;
  line-height: 18px;
  text-align: right;
}

/* Taskbar */
.taskbar {
  display: flex;
  height: 40px;
  background: linear-gradient(90deg, #22383f, #22363f 60%, #1a2541);
  color: #fff;
  font-family: var(--segoe);
}
.start {
  width: 48px;
}
.search {
  display: flex;
  align-items: center;
  width: 288px;
  border: 1px solid #4b5a60;
  background: #333;
  padding-left: 11px;
}
.search input {
  flex: 1;
  min-width: 0;
  margin-left: 11px;
  padding: 0;
  border: 0;
  outline: 0;
  background: none;
  color: #fff;
  font: 14px var(--segoe);
}
.search input::placeholder {
  color: #d0d0d0;
}
.apps {
  display: flex;
  margin-left: 3px;
}
.apps li {
  width: 49px;
}
.app {
  width: 48px;
  height: 40px;
}
.running {
  border-bottom: 2px solid #76a9dc;
  background: #485b64;
}
.tray {
  display: flex;
  align-items: center;
  margin-left: auto;
  padding-right: 4px;
}
.weather {
  gap: 6px;
  margin-right: 19px;
  font-size: 14px;
}
.tray-slot {
  width: 24px;
}
.clock {
  flex-direction: column;
  width: 64px;
  font-size: 11px;
  line-height: 18px;
}
.action {
  width: 48px;
  height: 40px;
  padding-right: 8px;
  border-right: 1px solid #6d7890;
}
</style>
